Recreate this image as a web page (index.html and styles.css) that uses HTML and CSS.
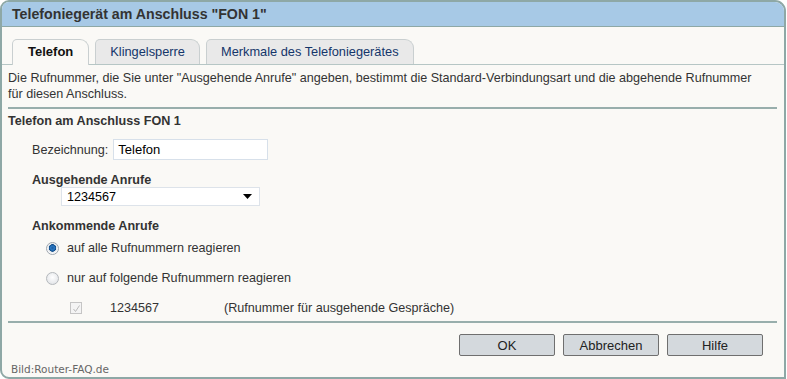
FILE: index.html
```html
<!DOCTYPE html>
<html lang="de">
<head>
<meta charset="utf-8">
<link rel="stylesheet" href="styles.css">
</head>
<body>
<div class="window">
  <div class="titlebar">Telefoniegerät am Anschluss "FON 1"</div>
  <div class="body">
    <div class="tabs">
      <div class="tab active">Telefon</div>
      <div class="tab">Klingelsperre</div>
      <div class="tab">Merkmale des Telefoniegerätes</div>
    </div>
    <div class="content">
      <p class="intro">Die Rufnummer, die Sie unter "Ausgehende Anrufe" angeben, bestimmt die Standard-Verbindungsart und die abgehende Rufnummer für diesen Anschluss.</p>
      <div class="sep"></div>
      <h2 class="section">Telefon am Anschluss FON 1</h2>
      <div class="row name-row">
        <span class="label">Bezeichnung:</span>
        <div class="input">Telefon</div>
      </div>
      <h3 class="sub">Ausgehende Anrufe</h3>
      <div class="select">
        <span>1234567</span>
        <svg class="arrow" width="9" height="5" viewBox="0 0 9 5"><path d="M0 0h9L4.5 5z" fill="#000"/></svg>
      </div>
      <h3 class="sub sub2">Ankommende Anrufe</h3>
      <div class="radio-row">
        <span class="radio checked"></span>
        <span>auf alle Rufnummern reagieren</span>
      </div>
      <div class="radio-row">
        <span class="radio"></span>
        <span>nur auf folgende Rufnummern reagieren</span>
      </div>
      <div class="check-row">
        <span class="check"><svg width="9" height="9" viewBox="0 0 9 9"><path d="M1.5 5l2 2.5L7.5 1.5" fill="none" stroke="#bbb" stroke-width="1"/></svg></span>
        <span class="num">1234567</span>
        <span>(Rufnummer für ausgehende Gespräche)</span>
      </div>
      <div class="sep sep2"></div>
      <div class="buttons">
        <button class="btn">OK</button>
        <button class="btn">Abbrechen</button>
        <button class="btn">Hilfe</button>
      </div>
      <div class="credit">Bild:Router-FAQ.de</div>
    </div>
  </div>
</div>
</body>
</html>
```
FILE: styles.css
```css
html, body {
  margin: 0;
  padding: 0;
  background: #ffffff;
}
body {
  font-family: "Liberation Sans", Arial, sans-serif;
  font-size: 12.6px;
  color: #333;
}
.window {
  width: 782px;
  height: 375px;
  border: 2px solid #8ea8a6;
  border-radius: 9px 11px 0 9px;
  overflow: hidden;
  background: #faf9f6;
  display: flex;
  flex-direction: column;
}
.titlebar {
  height: 24px;
  background: #a7c9e6;
  border-bottom: 1px solid #8ea8a6;
  font-weight: bold;
  font-size: 14.2px;
  color: #333;
  padding-left: 10px;
  line-height: 25px;
  flex: none;
}
.body {
  flex: 1;
  display: flex;
  flex-direction: column;
}
.tabs {
  display: flex;
  gap: 6px;
  margin-top: 12px;
  padding-left: 10px;
  border-bottom: 1px solid #b6c6c5;
  height: 25px;
}
.tab {
  height: 24px;
  border: 1px solid #c9cfd0;
  border-bottom: none;
  border-radius: 5px 9px 0 0;
  background: #e9e9e9;
  color: #14366a;
  font-size: 12.8px;
  line-height: 24px;
  padding: 0 14px;
}
.tab.active {
  background: #faf9f6;
  color: #111;
  font-weight: bold;
  font-size: 13px;
  padding: 0 15px;
  height: 25px;
  margin-bottom: -1px;
}
.content {
  padding: 0 7px 0 6px;
  display: flex;
  flex-direction: column;
  flex: 1;
}
.intro {
  margin: 5px 0 0;
  padding-right: 20px;
  line-height: 16px;
}
.sep {
  height: 2px;
  background: #98aeac;
  margin-top: 5px;
}
.section {
  font-size: 12.6px;
  font-weight: bold;
  margin: 5px 0 0;
  line-height: 14px;
}
.name-row {
  display: flex;
  align-items: center;
  margin-top: 11px;
  padding-left: 24px;
}
.label { margin-right: 5px; }
.input {
  width: 149px;
  height: 19px;
  border: 1px solid #d7e0ea;
  background: #fff;
  color: #000;
  font-size: 13px;
  line-height: 19px;
  padding-left: 4px;
}
.sub {
  font-size: 12.6px;
  font-weight: bold;
  margin: 13px 0 0 24px;
  line-height: 14px;
}
.select {
  width: 192px;
  height: 17px;
  margin-left: 53px;
  border: 1px solid #dde3ea;
  background: #fff;
  color: #000;
  display: flex;
  align-items: center;
  justify-content: space-between;
  padding: 0 0 0 5px;
  box-sizing: content-box;
}
.select span { margin-top: 1px; }
.arrow { margin-right: 7px; }
.sub2 { margin-top: 13px; }
.radio-row {
  display: flex;
  align-items: center;
  margin-top: 8px;
  padding-left: 38px;
  height: 14px;
}
.radio-row + .radio-row { margin-top: 16px; }
.radio {
  width: 11px;
  height: 11px;
  border-radius: 50%;
  border: 1px solid #b4b8bc;
  background: radial-gradient(circle at 50% 40%, #ffffff, #dcdfe3);
  margin-right: 8px;
  flex: none;
}
.radio.checked {
  background: radial-gradient(circle at 50% 45%, #1b5c9e 0, #2a78c4 2px, #0f4a86 3.5px, #e4e8ec 4px, #ffffff 6px);
  border-color: #9ea6ae;
}
.check-row {
  display: flex;
  align-items: center;
  margin-top: 16px;
  padding-left: 62px;
  height: 14px;
}
.check {
  width: 10px;
  height: 10px;
  border: 1px solid #c5c5c5;
  background: #f4f4f4;
  display: flex;
  align-items: center;
  justify-content: center;
  flex: none;
}
.num { margin-left: 28px; width: 114px; }
.sep2 { margin-top: 6px; }
.buttons {
  display: flex;
  justify-content: flex-end;
  gap: 8px;
  margin-top: 11px;
  padding-right: 14px;
}
.btn {
  width: 96px;
  height: 22px;
  border: 1px solid #6f6f6f;
  border-radius: 2px;
  background: #d4d9dd;
  font-family: "Liberation Sans", Arial, sans-serif;
  font-size: 13px;
  color: #222;
  padding: 0;
}
.credit {
  margin-top: auto;
  margin-bottom: 2px;
  padding-left: 3px;
  font-family: "DejaVu Sans", sans-serif;
  font-size: 10.5px;
  color: #666;
}
```
